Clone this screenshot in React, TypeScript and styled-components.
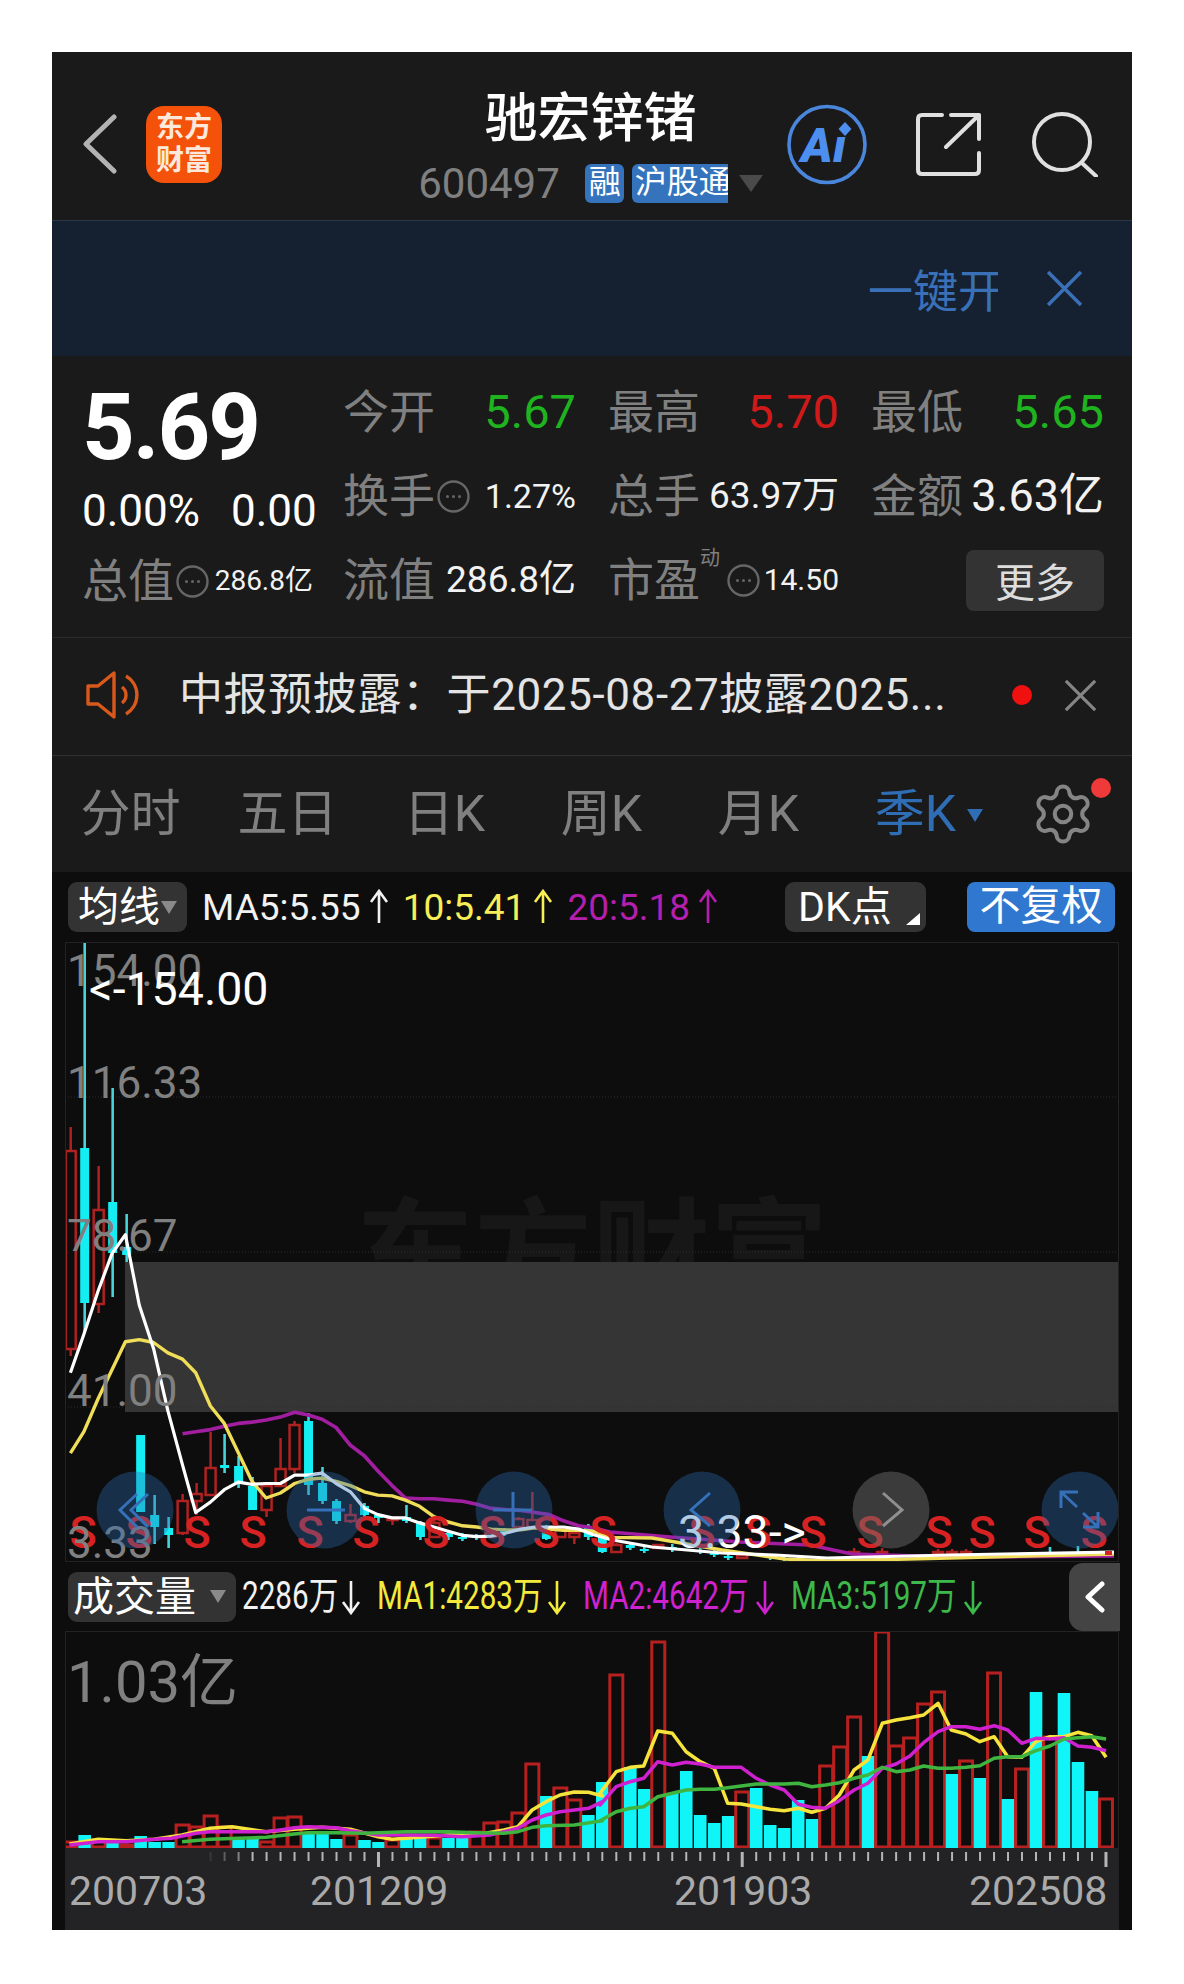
import React from "react";
import styled, { createGlobalStyle } from "styled-components";
import { Settings } from "lucide-react";

const SANS = `Roboto, "Noto Sans CJK SC", sans-serif`;

const GlobalStyle = createGlobalStyle`
  html, body {
    margin: 0;
    background: #fff;
    font-family: ${SANS};
  }
`;

const TONES: Record<string, string> = {
  white: "#f2f2f2",
  grey: "#808080",
  green: "#1fb41f",
  red: "#d01a1a",
  yellow: "#f8ee55",
  purple: "#b31fae",
  volYellow: "#f4ea3c",
  volPink: "#cf21cf",
  volGreen: "#3db84a",
};

const Frame = styled.main`
  width: 1080px;
  height: 1878px;
  margin: 52px auto 54px;
  background: #0d0d0d;
  overflow: hidden;
`;

/* ---- header ---- */

const Header = styled.header`
  box-sizing: border-box;
  height: 168px;
  padding: 16px 34px 0 31px;
  background: #1a1a1a;
  display: grid;
  grid-template-columns: 1fr auto 1fr;
  align-items: center;
`;

const HeaderLeft = styled.div`
  display: flex;
  align-items: center;
  gap: 29px;
`;

const Logo = styled.div`
  width: 76px;
  height: 77px;
  border-radius: 18px;
  background: #f4510b;
  color: #fde9dc;
  font-size: 28px;
  font-weight: 700;
  line-height: 33px;
  text-align: center;
  display: flex;
  align-items: center;
  justify-content: center;
`;

const Center = styled.div`
  align-self: start;
  margin-top: 21px;
  display: flex;
  flex-direction: column;
  align-items: center;
`;

const Title = styled.h1`
  margin: 0;
  color: #fff;
  font-size: 53px;
  font-weight: 500;
  line-height: 60px;
`;

const CodeRow = styled.div`
  margin-top: 14px;
  height: 40px;
  display: flex;
  align-items: center;
`;

const Code = styled.span`
  color: #808080;
  font-size: 42px;
  margin-right: 25px;
`;

const Badge = styled.span<{ $clip?: boolean }>`
  height: 39px;
  line-height: 37px;
  background: #3574bd;
  color: #fff;
  font-size: 32px;
  padding-left: ${(p) => (p.$clip ? "3px" : "4px")};
  border-radius: ${(p) => (p.$clip ? "6px 0 0 6px" : "6px")};
  width: ${(p) => (p.$clip ? "93px" : "35px")};
  margin-right: ${(p) => (p.$clip ? "11px" : "8px")};
  overflow: hidden;
  white-space: nowrap;
`;

const CodeCaret = styled.i`
  width: 0;
  height: 0;
  border-left: 12px solid transparent;
  border-right: 12px solid transparent;
  border-top: 17px solid #4a4a4a;
`;

const HeaderIcons = styled.div`
  justify-self: end;
  display: flex;
  align-items: center;
`;

const IconSlot = styled.span<{ $gap: number }>`
  display: flex;
  margin-right: ${(p) => p.$gap}px;
`;

const AiLetters = styled.text`
  font: italic 900 48px Roboto, sans-serif;
  fill: #4d8fef;
`;

/* ---- promo bar ---- */

const PromoBar = styled.div`
  box-sizing: border-box;
  height: 136px;
  padding-right: 49px;
  background: #152130;
  border-top: 1px solid #2b3947;
  display: flex;
  align-items: center;
  justify-content: flex-end;
  gap: 48px;
`;

const PromoText = styled.span`
  color: #3a70b8;
  font-size: 45px;
  width: 130px;
  overflow: hidden;
  white-space: nowrap;
`;

/* ---- quote ---- */

const Quote = styled.section`
  box-sizing: border-box;
  height: 281px;
  padding-left: 30px;
  background: #1a1a1a;
  display: flex;
  gap: 30px;
`;

const QuoteLeft = styled.div`
  width: 231px;
  padding-top: 36px;
  display: flex;
  flex-direction: column;
`;

const Price = styled.div`
  color: #fff;
  font-size: 92px;
  font-weight: 700;
  line-height: 72px;
  letter-spacing: -2px;
`;

const ChangeRow = styled.div`
  margin: 25px 0;
  color: #fff;
  font-size: 44px;
  line-height: 44px;
  display: flex;
  gap: 31px;
`;

const StatGrid = styled.div`
  padding-top: 14px;
  display: grid;
  grid-template-columns: 233px 231px 233px;
  grid-auto-rows: 84px;
  column-gap: 32px;
`;

const Stat = styled.div`
  display: flex;
  align-items: center;
  white-space: nowrap;
`;

const Label = styled.span`
  color: #808080;
  font-size: 46px;
  line-height: 46px;
  margin-top: -1px;
`;

const Sup = styled.sup`
  color: #808080;
  font-size: 20px;
  line-height: 1;
  align-self: flex-start;
  margin-top: 10px;
  width: 25px;
`;

const Value = styled.span<{ $size: number; $tone?: string }>`
  margin-left: auto;
  color: ${(p) => TONES[p.$tone || "white"]};
  font-size: ${(p) => p.$size}px;
  line-height: 46px;
`;

const InfoWrap = styled.svg`
  flex: none;
  margin-left: 2px;
  margin-right: 3px;
`;

const MoreButton = styled.button`
  justify-self: end;
  align-self: center;
  width: 138px;
  height: 61px;
  border: 0;
  border-radius: 8px;
  background: #333;
  color: #ddd;
  font-family: ${SANS};
  font-size: 40px;
  padding: 0;
`;

/* ---- notice ---- */

const Notice = styled.div`
  box-sizing: border-box;
  height: 119px;
  padding: 0 35px 3px 34px;
  background: #1a1a1a;
  border-top: 1px solid #2b2b2b;
  border-bottom: 1px solid #303030;
  display: flex;
  align-items: center;
`;

const NoticeText = styled.span`
  margin-left: 37px;
  color: #e4e4e4;
  font-size: 44px;
  letter-spacing: 0.6px;
  line-height: 60px;
  white-space: nowrap;
`;

const RedDot = styled.i<{ $size: number }>`
  width: ${(p) => p.$size}px;
  height: ${(p) => p.$size}px;
  border-radius: 50%;
  background: #f01010;
`;

const NoticeActions = styled.div`
  margin-left: auto;
  display: flex;
  align-items: center;
  gap: 32px;
`;

/* ---- period tabs ---- */

const Tabs = styled.nav`
  height: 116px;
  background: #1a1a1a;
  display: flex;
  align-items: center;
`;

const Tab = styled.span<{ $active?: boolean }>`
  position: relative;
  width: 157px;
  text-align: center;
  color: ${(p) => (p.$active ? "#2f6db5" : "#808080")};
  font-size: 50px;
  line-height: 60px;
`;

const TabCaret = styled.i`
  position: absolute;
  left: 130px;
  top: 25px;
  width: 0;
  height: 0;
  border-left: 8px solid transparent;
  border-right: 8px solid transparent;
  border-top: 13px solid #2f6db5;
`;

const GearWrap = styled.div`
  position: relative;
  margin-left: 36px;
  height: 66px;
  color: #858585;
`;

const GearDot = styled(RedDot)`
  position: absolute;
  top: -3px;
  right: -15px;
  background: #f03a3a;
`;

/* ---- indicator rows ---- */

const IndicatorRow = styled.div<{ $height: number }>`
  box-sizing: border-box;
  height: ${(p) => p.$height}px;
  padding-left: 16px;
  display: flex;
  align-items: center;
  background: #0d0d0d;
`;

const Pill = styled.div<{ $width: number; $pad: number }>`
  position: relative;
  box-sizing: border-box;
  flex: none;
  width: ${(p) => p.$width}px;
  height: 50px;
  padding-left: ${(p) => p.$pad}px;
  border-radius: 9px;
  background: #333;
  color: #fff;
  font-size: 41px;
  line-height: 50px;
  white-space: nowrap;
  display: flex;
  align-items: center;
`;

const PillCaret = styled.i`
  margin-left: auto;
  margin-right: 10px;
  width: 0;
  height: 0;
  border-left: 8px solid transparent;
  border-right: 8px solid transparent;
  border-top: 13px solid #8a8a8a;
`;

const CornerMark = styled.i`
  position: absolute;
  right: 6px;
  bottom: 7px;
  width: 0;
  height: 0;
  border-left: 14px solid transparent;
  border-bottom: 12px solid #fff;
`;

const MaGroups = styled.div`
  margin-left: 15px;
  display: flex;
  gap: 13px;
`;

const MaItem = styled.span<{ $tone: string }>`
  display: flex;
  align-items: center;
  gap: 7px;
  color: ${(p) => TONES[p.$tone]};
  font-size: 37px;
  white-space: nowrap;
`;

const RightTools = styled.div`
  margin-left: auto;
  padding-right: 17px;
  display: flex;
  gap: 41px;
`;

const PlainBadge = styled.div`
  width: 148px;
  height: 50px;
  border-radius: 8px;
  background: #2f77cf;
  color: #fff;
  font-size: 41px;
  line-height: 49px;
  text-align: center;
`;

const VolGroups = styled.div`
  margin-left: 6px;
  display: flex;
  gap: 15px;
`;

const VolItem = styled.span<{ $tone: string }>`
  display: flex;
  align-items: center;
  gap: 2px;
  color: ${(p) => TONES[p.$tone]};
`;

const VolText = styled.span<{ $width: number }>`
  display: block;
  width: ${(p) => p.$width}px;
  padding-bottom: 2px;
  font-size: 38px;
  line-height: 46px;
  white-space: nowrap;
  transform: scaleX(0.78);
  transform-origin: left center;
`;

const CollapseTab = styled.div`
  margin-left: auto;
  margin-right: 12px;
  align-self: stretch;
  width: 51px;
  margin-top: 1px;
  border-radius: 14px 0 0 14px;
  background: #444;
  display: flex;
  align-items: center;
  justify-content: center;
`;

/* ---- charts ---- */

const ChartSvg = styled.svg`
  display: block;
  margin-left: 13px;
`;

const AxisBar = styled.svg`
  display: block;
  margin-left: 13px;
  background: #232325;
`;

const ScaleLabel = styled.text`
  font: 400 44px Roboto, sans-serif;
  fill: #808080;
`;

const PeakLabel = styled.text`
  font: 400 46.5px Roboto, sans-serif;
  fill: #fff;
`;

const SellMark = styled.text`
  font: 500 45px Roboto, sans-serif;
  fill: #d62222;
`;

const Watermark = styled.text`
  font: 700 118px "Noto Sans CJK SC", sans-serif;
  fill: #171717;
`;

const VolumeMax = styled.text`
  font: 400 58px Roboto, "Noto Sans CJK SC", sans-serif;
  fill: #808080;
`;

const DateLabel = styled.text`
  font: 400 41px Roboto, sans-serif;
  fill: #aaa;
`;

type Pt = [number, number];

const xAt = (i: number) => 70.7 + i * 13.99;
const points = (pts: Pt[]) => pts.map(([x, y]) => `${x.toFixed(1)},${y.toFixed(1)}`).join(" ");

// traced from the reference, in crop units, then moved to page pixels
const priceLeft = (pts: Pt[]): Pt[] => pts.map(([x, y]) => [50 + x / 2.8, 930 + y / 2.412]);
const volLeft = (pts: Pt[]): Pt[] => pts.map(([x, y]) => [50 + x / 2.8, 1560 + y / 3]);
const volRight = (pts: Pt[]): Pt[] => pts.map(([x, y]) => [600 + x * 0.3443, 1560 + y / 3]);

const MA5: Pt[] = [
  ...priceLeft([[57,1068],[95,975],[135,870],[174,780],[211,735],[250,905],[290,1010],[330,1160],[371,1290],[408,1405],[449,1380],[488,1350],[527,1332],[566,1337],[605,1335],[645,1335],[685,1315],[723,1315],[762,1310],[801,1335],[841,1355],[880,1395],[918,1410],[958,1418],[995,1418],[1035,1430],[1075,1440],[1115,1450],[1155,1460],[1195,1463],[1235,1462],[1275,1455],[1318,1445],[1358,1440],[1398,1440],[1438,1440],[1480,1445],[1520,1458],[1568,1470]]),
  [652,1547],[722,1553],[775,1555],[827,1558],[950,1555],[1114,1552],
];

const MA10: Pt[] = [
  ...priceLeft([[57,1262],[95,1210],[135,1130],[174,1060],[211,993],[250,988],[290,995],[330,1020],[371,1035],[408,1068],[449,1148],[488,1190],[527,1260],[566,1330],[605,1370],[645,1358],[685,1335],[723,1325],[762,1322],[801,1330],[841,1340],[880,1355],[918,1363],[958,1365],[995,1375],[1035,1390],[1075,1415],[1115,1428],[1155,1437],[1195,1440],[1235,1445],[1275,1447],[1318,1447],[1358,1442],[1398,1445],[1438,1448],[1480,1448],[1520,1450],[1568,1465]]),
  [652,1538],[722,1550],[785,1559],[827,1561],[950,1558],[1114,1554],
];

const MA20: Pt[] = [
  ...priceLeft([[371,1215],[408,1210],[449,1205],[488,1197],[527,1190],[566,1187],[605,1182],[645,1175],[685,1163],[723,1170],[762,1180],[801,1200],[841,1243],[880,1268],[918,1305],[958,1340],[995,1370],[1035,1372],[1075,1372],[1115,1375],[1155,1378],[1195,1385],[1235,1395],[1275,1398],[1318,1400],[1358,1405],[1398,1410],[1438,1425],[1480,1437],[1520,1442],[1568,1452]]),
  [670,1537],[740,1542],[810,1545],[852,1554],[950,1557],[1114,1556],
];

// index, red?, body top, body bottom, wick top, wick bottom
type Candle = [number, boolean, number, number, number, number];

const CANDLES: Candle[] = [
  [0,true,1151,1349,1127,1356],[1,false,1148,1303,942,1332],[2,true,1210,1304,1166,1313],[3,false,1202,1253,1088,1297],
  [4,false,1247,1255,1214,1262],[5,false,1435,1512,1435,1512],[6,false,1515,1527,1495,1544],[7,false,1528,1535,1517,1548],
  [8,true,1501,1533,1494,1535],[9,true,1494,1501,1483,1515],[10,true,1468,1495,1432,1495],[11,false,1465,1468,1434,1473],
  [12,false,1466,1483,1456,1488],[13,false,1486,1510,1477,1510],[14,true,1486,1510,1486,1517],[15,true,1469,1486,1438,1486],
  [16,true,1425,1469,1421,1473],[17,false,1421,1485,1413,1495],[18,false,1483,1501,1467,1504],[19,false,1501,1521,1499,1524],
  [20,true,1515,1521,1504,1523],[21,false,1506,1515,1503,1517],[22,false,1515,1518,1515,1523],[23,true,1518,1520,1518,1525],
  [24,false,1517,1521,1505,1523],[25,false,1523,1537,1521,1540],[26,true,1523,1537,1521,1538],[27,false,1533,1537,1530,1540],
  [28,false,1537,1539,1533,1541],[29,false,1536,1538,1534,1540],[30,true,1533,1537,1530,1538],[31,false,1530,1534,1528,1536],
  [32,true,1519,1527,1517,1528],[33,true,1520,1527,1492,1527],[34,false,1527,1539,1525,1540],[35,true,1529,1537,1527,1538],
  [36,true,1533,1537,1531,1544],[37,false,1527,1537,1524,1540],[38,false,1535,1552,1533,1553],[39,true,1545,1552,1543,1553],
  [40,false,1545,1548,1543,1550],[41,false,1549,1551,1546,1553],[42,true,1545,1548,1544,1549],[43,false,1547,1549,1544,1552],
  [45,false,1550,1552,1547,1554],[46,false,1553,1555,1550,1557],[47,false,1556,1558,1553,1560],[48,true,1555,1558,1554,1559],
  [50,false,1556,1558,1554,1560],[51,false,1558,1560,1556,1561],[52,false,1559,1560,1557,1561],
  [56,true,1552,1553,1548,1554],[58,true,1552,1553,1548,1554],[62,true,1552,1553,1549,1554],[63,true,1552,1553,1549,1554],
  [64,true,1552,1553,1549,1554],[70,false,1552,1553,1547,1554],[72,false,1552,1553,1546,1554],
];

const SELLS = [83, 139, 197, 253, 310, 366, 436, 492, 546, 603, 702, 758, 813, 870, 939, 982, 1037, 1094];

// red?, top of the volume bar
const VOLUMES: [boolean, number][] = [
  [true,1842],[false,1835],[true,1840],[false,1843],[true,1845],[false,1836],[false,1842],[false,1842],[true,1825],[true,1827],
  [true,1816],[true,1827],[false,1838],[false,1838],[true,1842],[true,1818],[true,1817],[false,1832],[false,1832],[false,1839],
  [true,1835],[false,1840],[false,1842],[true,1840],[false,1837],[false,1838],[true,1838],[false,1838],[false,1838],[true,1832],
  [true,1823],[true,1822],[true,1813],[true,1764],[false,1796],[true,1788],[true,1800],[false,1815],[false,1782],[true,1675],
  [false,1767],[false,1789],[true,1642],[false,1793],[false,1771],[false,1815],[false,1823],[false,1816],[true,1792],[false,1788],
  [false,1825],[false,1828],[false,1800],[false,1819],[true,1766],[true,1747],[true,1717],[false,1756],[true,1632],[true,1746],
  [true,1738],[true,1704],[true,1692],[false,1774],[true,1761],[false,1778],[true,1673],[false,1799],[true,1769],[false,1692],
  [true,1737],[false,1693],[false,1762],[false,1791],[true,1799],
];

const VOL_YELLOW: Pt[] = [
  ...volLeft([[55,852],[135,838],[213,842],[292,838],[370,825],[448,805],[510,800],[605,815],[684,808],[762,802],[841,808],[919,830],[958,838],[1035,832],[1115,825],[1192,825],[1271,810],[1310,800],[1350,750],[1389,725],[1428,705],[1468,696],[1508,697],[1547,708]]),
  ...volRight([[0,700],[47,635],[88,622],[127,618],[168,513],[210,520],[250,575],[291,605],[332,625],[371,730],[410,732],[454,740],[494,748],[535,752],[576,745],[615,757],[655,745],[695,705],[738,630],[778,600],[820,490],[860,480],[900,473],[940,465],[982,430],[1020,510],[1063,522],[1103,545],[1145,530],[1184,590],[1225,592],[1266,545],[1307,530],[1348,530],[1388,517],[1428,527],[1470,592]]),
];

const VOL_PINK: Pt[] = [
  ...volLeft([[55,855],[135,845],[213,845],[292,838],[340,835],[409,820],[448,815],[527,815],[605,815],[645,810],[684,803],[723,800],[801,803],[841,812],[919,825],[998,825],[1075,826],[1153,830],[1232,825],[1310,805],[1350,780],[1389,765],[1428,755],[1468,750],[1508,745],[1547,725]]),
  ...volRight([[0,735],[47,680],[88,665],[127,655],[168,605],[210,615],[250,607],[291,612],[332,622],[371,622],[410,622],[454,655],[494,675],[535,690],[576,733],[615,742],[655,745],[695,722],[738,690],[778,670],[820,625],[860,612],[900,588],[940,548],[982,515],[1020,500],[1063,500],[1103,508],[1145,497],[1184,510],[1225,550],[1266,535],[1307,537],[1348,533],[1388,558],[1428,562],[1470,572]]),
];

const VOL_GREEN: Pt[] = [
  ...volLeft([[370,845],[448,838],[527,835],[605,832],[684,822],[723,818],[801,818],[880,820],[998,815],[1115,815],[1192,818],[1271,820],[1310,815],[1350,802],[1389,797],[1468,795],[1547,782]]),
  ...volRight([[0,782],[47,755],[88,745],[127,740],[168,710],[210,700],[250,690],[291,688],[332,688],[371,683],[410,678],[454,672],[494,672],[535,672],[576,670],[615,680],[655,675],[695,668],[738,655],[778,645],[820,622],[860,635],[900,630],[940,618],[982,625],[1020,625],[1063,622],[1103,617],[1145,595],[1184,590],[1225,590],[1266,572],[1307,558],[1348,537],[1388,533],[1428,530],[1470,537]]),
];

const InfoDot = () => (
  <InfoWrap width="33" height="33" viewBox="0 0 33 33">
    <circle cx="16.5" cy="16.5" r="15" fill="none" stroke="#666" strokeWidth="2.4" />
    <circle cx="10.5" cy="16.5" r="1.5" fill="#666" />
    <circle cx="16.5" cy="16.5" r="1.5" fill="#666" />
    <circle cx="22.5" cy="16.5" r="1.5" fill="#666" />
  </InfoWrap>
);

const Arrow = ({ down }: { down?: boolean }) => (
  <svg width="22" height="36" viewBox="0 0 22 36" style={{ flex: "none" }}>
    <path
      d={down ? "M11 2V34M3 23L11 34L19 23" : "M11 2V34M3 13L11 2L19 13"}
      fill="none"
      stroke="currentColor"
      strokeWidth="2.6"
    />
  </svg>
);

const CloseX = ({ size, color }: { size: number; color: string }) => (
  <svg width={size} height={size} viewBox="0 0 36 36" style={{ flex: "none" }}>
    <path d="M2 2L34 34M34 2L2 34" fill="none" stroke={color} strokeWidth="3.4" />
  </svg>
);

const PriceChart = () => (
  <ChartSvg width="1054" height="620" viewBox="65 942 1054 620">
    <Watermark x="356" y="1297">东方财富</Watermark>
    <rect x="125" y="1262" width="994" height="150" fill="#353535" />
    {[1097, 1252, 1407].map((y) => (
      <line key={y} x1="65" x2="1119" y1={y} y2={y} stroke="#2c2c2c" strokeDasharray="1 2" />
    ))}
    {CANDLES.map(([i, red, top, bottom, wickTop, wickBottom]) => {
      const x = xAt(i);
      return (
        <g key={i}>
          <line
            x1={x}
            x2={x}
            y1={wickTop}
            y2={wickBottom}
            stroke={red ? "#b02222" : "#46d4d8"}
            strokeWidth={red ? 2.5 : 2.6}
          />
          {red ? (
            <rect x={x - 5} y={top} width="10" height={bottom - top} fill="#0d0d0d" stroke="#b02222" strokeWidth="2.5" />
          ) : (
            <rect x={x - 4.5} y={top} width="9" height={bottom - top} fill="#14eef2" />
          )}
        </g>
      );
    })}
    <polyline points={points(MA20)} fill="none" stroke="#a21ea0" strokeWidth="3.6" strokeLinejoin="round" />
    <polyline points={points(MA10)} fill="none" stroke="#f0de5a" strokeWidth="3.4" strokeLinejoin="round" />
    <polyline points={points(MA5)} fill="none" stroke="#fff" strokeWidth="3.2" strokeLinejoin="round" />
    <rect x="1105" y="1551" width="7" height="4" fill="#d62222" />
    {SELLS.map((x) => (
      <SellMark key={x} x={x} y="1548" textAnchor="middle">S</SellMark>
    ))}
    <ScaleLabel x="67" y="986">154.00</ScaleLabel>
    <ScaleLabel x="67" y="1098">116.33</ScaleLabel>
    <ScaleLabel x="67" y="1251">78.67</ScaleLabel>
    <ScaleLabel x="67" y="1406">41.00</ScaleLabel>
    <ScaleLabel x="67" y="1558">3.33</ScaleLabel>
    <PeakLabel x="89" y="1005">{"<-154.00"}</PeakLabel>
    <PeakLabel x="678" y="1548">{"3.33->"}</PeakLabel>
    {[135, 325, 514, 702].map((cx) => (
      <circle key={cx} cx={cx} cy="1510" r="38.5" fill="#2a6cb4" fillOpacity="0.36" />
    ))}
    <circle cx="891" cy="1510" r="38.5" fill="#6a6a6a" fillOpacity="0.5" />
    <circle cx="1080" cy="1510" r="38.5" fill="#2a6cb4" fillOpacity="0.36" />
    <g fill="none" stroke="#3570b8" strokeWidth="3">
      <path d="M137 1494L120 1510L137 1527M148 1494L131 1510L148 1527" />
      <path d="M307 1510H345" />
      <path d="M493 1510H532M513 1492V1527" />
      <path d="M710 1493L691 1510L710 1526" />
      <path d="M1077 1507L1061 1492M1078 1492H1061V1508M1083 1513L1098 1527M1083 1527H1098V1512" />
    </g>
    <path d="M883 1493L902 1510L883 1526" fill="none" stroke="#8f8f8f" strokeWidth="3" />
    <rect x="65.5" y="942.5" width="1053" height="619" fill="none" stroke="#232323" />
  </ChartSvg>
);

const VolumeChart = () => (
  <ChartSvg width="1054" height="217" viewBox="65 1631 1054 217">
    <VolumeMax x="67" y="1702">1.03亿</VolumeMax>
    {VOLUMES.map(([red, top], i) => {
      const x = xAt(i);
      return red ? (
        <rect key={i} x={x - 6.5} y={top} width="13" height={1847 - top} fill="none" stroke="#b82020" strokeWidth="3" />
      ) : (
        <rect key={i} x={x - 6.3} y={top} width="12.6" height={1848 - top} fill="#10f5f8" />
      );
    })}
    <polyline points={points(VOL_YELLOW)} fill="none" stroke="#f6e43c" strokeWidth="3.5" strokeLinejoin="round" />
    <polyline points={points(VOL_PINK)} fill="none" stroke="#cf21cf" strokeWidth="3.5" strokeLinejoin="round" />
    <polyline points={points(VOL_GREEN)} fill="none" stroke="#3fb53f" strokeWidth="3.5" strokeLinejoin="round" />
    <path d="M65.5 1848V1631.5H1118.5V1848" fill="none" stroke="#232323" />
  </ChartSvg>
);

const DateAxis = () => {
  const ticks = Array.from({ length: 65 }, (_, n) => n + 10);
  return (
    <AxisBar width="1054" height="82" viewBox="65 1848 1054 82">
      {ticks.map((i) => {
        const long = i === 22 || i === 48 || i === 74;
        return (
          <line
            key={i}
            x1={xAt(i)}
            x2={xAt(i)}
            y1="1852"
            y2={long ? 1867 : 1861}
            stroke="#b5b5b5"
            strokeWidth={long ? 3 : 2}
            strokeOpacity={i < 13 ? 0.15 + (i - 10) * 0.25 : 1}
          />
        );
      })}
      <DateLabel x="69" y="1905">200703</DateLabel>
      <DateLabel x="310" y="1905">201209</DateLabel>
      <DateLabel x="674" y="1905">201903</DateLabel>
      <DateLabel x="969" y="1905">202508</DateLabel>
    </AxisBar>
  );
};

export default function App() {
  return (
    <>
      <GlobalStyle />
      <Frame>
        <Header>
          <HeaderLeft>
            <svg width="34" height="60" viewBox="0 0 34 60">
              <path d="M31 3L3 30L31 57" fill="none" stroke="#b3b3b3" strokeWidth="5" strokeLinecap="round" strokeLinejoin="round" />
            </svg>
            <Logo>东方<br />财富</Logo>
          </HeaderLeft>
          <Center>
            <Title>驰宏锌锗</Title>
            <CodeRow>
              <Code>600497</Code>
              <Badge>融</Badge>
              <Badge $clip>沪股通</Badge>
              <CodeCaret />
            </CodeRow>
          </Center>
          <HeaderIcons>
            <IconSlot $gap={49}>
              <svg width="80" height="81" viewBox="0 0 80 81">
                <circle cx="40" cy="40.5" r="38" fill="none" stroke="#4a86dc" strokeWidth="3.6" />
                <AiLetters x="14" y="58">Aı</AiLetters>
                <path d="M58 18L64.5 25L58 32L51.5 25Z" fill="#4d8fef" />
              </svg>
            </IconSlot>
            <IconSlot $gap={51}>
              <svg width="65" height="64" viewBox="0 0 65 64">
                <path
                  d="M26 3H6Q2 3 2 7V58Q2 62 6 62H59Q63 62 63 58V41M35 3H63V27M63 3L30 35"
                  fill="none"
                  stroke="#e0e0e0"
                  strokeWidth="4"
                  strokeLinecap="round"
                  strokeLinejoin="round"
                />
              </svg>
            </IconSlot>
            <svg width="66" height="66" viewBox="0 0 66 66">
              <circle cx="30" cy="31" r="28" fill="none" stroke="#e0e0e0" strokeWidth="4" />
              <path d="M51 53L64 65" fill="none" stroke="#e0e0e0" strokeWidth="4" strokeLinecap="round" />
            </svg>
          </HeaderIcons>
        </Header>

        <PromoBar>
          <PromoText>一键开</PromoText>
          <CloseX size={37} color="#3a70b8" />
        </PromoBar>

        <Quote>
          <QuoteLeft>
            <Price>5.69</Price>
            <ChangeRow>
              <span>0.00%</span>
              <span>0.00</span>
            </ChangeRow>
            <Stat>
              <Label>总值</Label>
              <InfoDot />
              <Value $size={28}>286.8亿</Value>
            </Stat>
          </QuoteLeft>
          <StatGrid>
            <Stat><Label>今开</Label><Value $size={47} $tone="green">5.67</Value></Stat>
            <Stat><Label>最高</Label><Value $size={47} $tone="red">5.70</Value></Stat>
            <Stat><Label>最低</Label><Value $size={47} $tone="green">5.65</Value></Stat>
            <Stat><Label>换手</Label><InfoDot /><Value $size={34}>1.27%</Value></Stat>
            <Stat><Label>总手</Label><Value $size={37}>63.97万</Value></Stat>
            <Stat><Label>金额</Label><Value $size={45}>3.63亿</Value></Stat>
            <Stat><Label>流值</Label><Value $size={37}>286.8亿</Value></Stat>
            <Stat><Label>市盈</Label><Sup>动</Sup><InfoDot /><Value $size={30}>14.50</Value></Stat>
            <MoreButton>更多</MoreButton>
          </StatGrid>
        </Quote>

        <Notice>
          <svg width="56" height="48" viewBox="0 0 56 48">
            <path
              d="M2 15H12L28 2V46L12 33H2ZM36 16A10 10 0 0 1 36 32M40 5A22 22 0 0 1 40 43"
              fill="none"
              stroke="#d9591c"
              strokeWidth="3.4"
              strokeLinejoin="round"
            />
          </svg>
          <NoticeText>中报预披露：于2025-08-27披露2025...</NoticeText>
          <NoticeActions>
            <RedDot $size={20} />
            <CloseX size={33} color="#858585" />
          </NoticeActions>
        </Notice>

        <Tabs>
          <Tab>分时</Tab>
          <Tab>五日</Tab>
          <Tab>日K</Tab>
          <Tab>周K</Tab>
          <Tab>月K</Tab>
          <Tab $active>季K<TabCaret /></Tab>
          <GearWrap>
            <Settings size={66} strokeWidth={1.5} />
            <GearDot $size={20} />
          </GearWrap>
        </Tabs>

        <IndicatorRow $height={70}>
          <Pill $width={119} $pad={10}>均线<PillCaret /></Pill>
          <MaGroups>
            <MaItem $tone="white">MA5:5.55<Arrow /></MaItem>
            <MaItem $tone="yellow">10:5.41<Arrow /></MaItem>
            <MaItem $tone="purple">20:5.18<Arrow /></MaItem>
          </MaGroups>
          <RightTools>
            <Pill $width={141} $pad={13}>DK点<CornerMark /></Pill>
            <PlainBadge>不复权</PlainBadge>
          </RightTools>
        </IndicatorRow>

        <PriceChart />

        <IndicatorRow $height={69}>
          <Pill $width={168} $pad={5}>成交量<PillCaret /></Pill>
          <VolGroups>
            <VolItem $tone="white"><VolText $width={96}>2286万</VolText><Arrow down /></VolItem>
            <VolItem $tone="volYellow"><VolText $width={167}>MA1:4283万</VolText><Arrow down /></VolItem>
            <VolItem $tone="volPink"><VolText $width={169}>MA2:4642万</VolText><Arrow down /></VolItem>
            <VolItem $tone="volGreen"><VolText $width={169}>MA3:5197万</VolText><Arrow down /></VolItem>
          </VolGroups>
          <CollapseTab>
            <svg width="20" height="32" viewBox="0 0 20 32">
              <path d="M17 3L3 16L17 29" fill="none" stroke="#fff" strokeWidth="5" strokeLinecap="round" strokeLinejoin="round" />
            </svg>
          </CollapseTab>
        </IndicatorRow>

        <VolumeChart />
        <DateAxis />
      </Frame>
    </>
  );
}
